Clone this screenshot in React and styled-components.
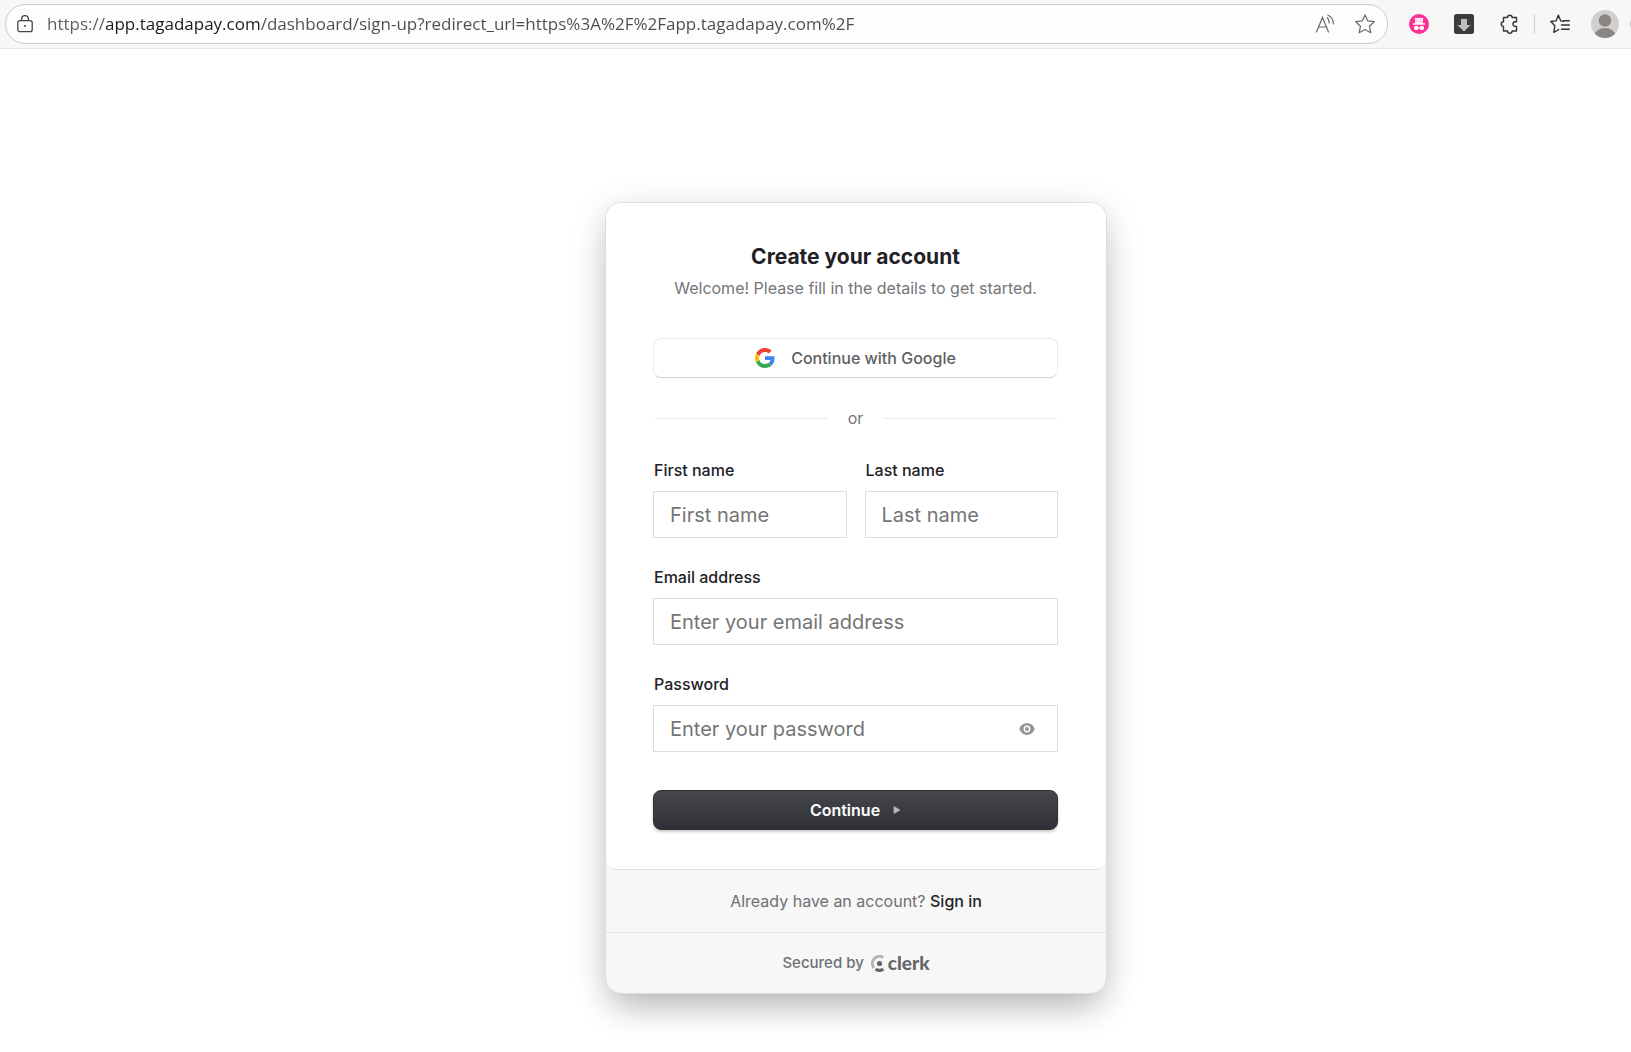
import React, { useState } from 'react'
import styled, { createGlobalStyle } from 'styled-components'

const PAGE_URL =
	'https://app.tagadapay.com/dashboard/sign-up?redirect_url=https%3A%2F%2Fapp.tagadapay.com%2F'

function LockIcon() {
	return (
		<svg width='16' height='18' viewBox='0 0 16 18' fill='none' stroke='#444' strokeWidth='1.3'>
			<rect x='.8' y='5.6' width='14.4' height='11' rx='2.2' />
			<path d='M4.6 5.4V4a3.4 3.4 0 0 1 6.8 0v1.4' />
			<circle cx='8' cy='11' r='1' fill='#444' stroke='none' />
		</svg>
	)
}

function ReadAloudIcon() {
	return (
		<svg width='20' height='20' viewBox='0 0 20 20' fill='none' stroke='#6a6a6a' strokeWidth='1.2' strokeLinecap='round'>
			<path d='M1.500 18 7.500 3.400 13.500 18M3.700 13h7.600' />
			<path d='M12.400 3.600c1.200 1.600 1.800 3.400 1.800 5.400M12.800 1c3.400 1.600 5.600 5 5.600 9' />
		</svg>
	)
}

function StarIcon() {
	return (
		<svg width='20' height='20' viewBox='0 0 20 20' fill='none' stroke='#6a6a6a' strokeWidth='1.2' strokeLinejoin='round'>
			<path d='M10 .9l2.8 6 6.5.8-4.8 4.5 1.3 6.5L10 15.500l-5.800 3.200 1.300-6.500L.7 7.700l6.500-.8z' />
		</svg>
	)
}

function IncognitoIcon() {
	return (
		<svg width='20' height='20' viewBox='0 0 20 20'>
			<circle cx='10' cy='10' r='10' fill='#ff2e93' />
			<path d='M5.800 3.800l1.600.4 1.300-.5 1.300.5 1.300-.5 1.300.5 1.600-.4-.4 5.400H6.200zM4 9.200h12v1.500H4z' fill='#fff' />
			<path d='M6.200 6h7.600M6.200 7.800h7.600' stroke='#ff9dcb' strokeWidth='.7' />
			<circle cx='7.300' cy='14' r='2.300' fill='#fff' />
			<circle cx='12.700' cy='14' r='2.300' fill='#fff' />
			<path d='M9 13.600h2' stroke='#fff' />
		</svg>
	)
}

function DownloadIcon() {
	return (
		<svg width='20' height='20' viewBox='0 0 20 20'>
			<rect width='20' height='20' rx='2.500' fill='#3b3b3d' />
			<path d='M7 5h6v6h3.500L10 17.500 3.500 11H7z' fill='#bdbdbd' />
		</svg>
	)
}

function PuzzleIcon() {
	return (
		<svg width='20' height='20' viewBox='0 0 20 20' fill='none' stroke='#333' strokeWidth='1.4' strokeLinejoin='round'>
			<path d='M4.500 3.500h4a2.300 2.300 0 0 1 4.600 0h4.400v4.300h-1.200a2.300 2.300 0 0 0 0 4.600h1.200V17h-4.400a2.300 2.300 0 0 1-4.600 0h-4v-4.600a2.300 2.300 0 0 1 0-4.600z' />
		</svg>
	)
}

function FavoritesIcon() {
	return (
		<svg width='20' height='20' viewBox='0 0 20 20' fill='none' stroke='#333' strokeWidth='1.4' strokeLinejoin='round' strokeLinecap='round'>
			<path d='M13.500 7.300 10.800 6.900 8.400 1.200 6 6.900.8 7.500l4 4.300-1 6.500 5-2.800' />
			<path d='M13.500 6.800H19.300M11.500 11H19.300M11.500 15.200H19.300' />
		</svg>
	)
}

function AvatarIcon() {
	return (
		<svg width='28' height='28' viewBox='0 0 28 28'>
			<clipPath id='avatar'>
				<circle cx='14' cy='14' r='14' />
			</clipPath>
			<g clipPath='url(#avatar)'>
				<rect width='28' height='28' fill='#d2d0ce' />
				<circle cx='14' cy='10.500' r='6.200' fill='#8a8683' />
				<ellipse cx='14' cy='26' rx='10.500' ry='8' fill='#8a8683' />
			</g>
		</svg>
	)
}

function GoogleIcon() {
	return (
		<svg width='20' height='20' viewBox='0 0 48 48'>
			<path fill='#EA4335' d='M24 9.5c3.54 0 6.71 1.22 9.21 3.6l6.85-6.85C35.9 2.38 30.47 0 24 0 14.62 0 6.51 5.38 2.56 13.22l7.98 6.19C12.43 13.72 17.74 9.5 24 9.5z' />
			<path fill='#4285F4' d='M46.98 24.55c0-1.57-.15-3.09-.38-4.55H24v9.02h12.94c-.58 2.96-2.26 5.48-4.78 7.18l7.73 6c4.51-4.18 7.09-10.36 7.09-17.65z' />
			<path fill='#FBBC05' d='M10.53 28.59c-.48-1.45-.76-2.99-.76-4.59s.27-3.14.76-4.59l-7.98-6.19C.92 16.46 0 20.12 0 24c0 3.88.92 7.54 2.56 10.78l7.97-6.19z' />
			<path fill='#34A853' d='M24 48c6.48 0 11.93-2.13 15.89-5.81l-7.73-6c-2.15 1.45-4.92 2.3-8.16 2.3-6.26 0-11.57-4.22-13.47-9.91l-7.98 6.19C6.51 42.62 14.62 48 24 48z' />
		</svg>
	)
}

function EyeIcon() {
	return (
		<svg width='16' height='12' viewBox='0 0 16 12'>
			<path
				fill='#959595'
				fillRule='evenodd'
				d='M8 0c3.6 0 6.2 2.1 7.4 5.2.2.5.2 1.1 0 1.6C14.200 9.900 11.600 12 8 12S1.800 9.900.6 6.800a2.200 2.200 0 0 1 0-1.600C1.800 2.100 4.400 0 8 0zm0 2.600a3.400 3.400 0 1 0 0 6.800 3.400 3.400 0 0 0 0-6.800z'
			/>
			<circle cx='8' cy='6' r='2' fill='#959595' />
		</svg>
	)
}

function ClerkIcon() {
	return (
		<svg width='14' height='17' viewBox='0 0 14 17'>
			<path d='M12.300 2.600A7 7 0 0 0 3.100 13' fill='none' stroke='#b4b4b6' strokeWidth='3' />
			<circle cx='8.500' cy='8.500' r='2.600' fill='#66666a' />
			<path d='M3.600 15.200l2-2.200c1.800 1 4 1 5.800 0l2 2.200c-2.800 2.400-7 2.400-9.800 0z' fill='#66666a' />
		</svg>
	)
}

function Field({ id, label, children, ...rest }) {
	return (
		<FieldBox>
			<Label htmlFor={id}>{label}</Label>
			<InputWrap>
				<Input id={id} {...rest} />
				{children}
			</InputWrap>
		</FieldBox>
	)
}

function App() {
	const [url, setUrl] = useState(PAGE_URL)
	const [showPassword, setShowPassword] = useState(false)

	return (
		<>
			<GlobalStyle />
			<Toolbar>
				<AddressBar>
					<LockIcon />
					<AddressInput
						type='text'
						aria-label='Address'
						spellCheck={false}
						value={url}
						onChange={(e) => setUrl(e.target.value)}
					/>
					<BarActions>
						<BarButton aria-label='Read aloud'>
							<ReadAloudIcon />
						</BarButton>
						<BarButton aria-label='Add to favorites'>
							<StarIcon />
						</BarButton>
					</BarActions>
				</AddressBar>
				<Extensions>
					<BarButton aria-label='Incognito'>
						<IncognitoIcon />
					</BarButton>
					<BarButton aria-label='Download'>
						<DownloadIcon />
					</BarButton>
					<BarButton aria-label='Extensions'>
						<PuzzleIcon />
					</BarButton>
				</Extensions>
				<Separator />
				<BarButton aria-label='Favorites'>
					<FavoritesIcon />
				</BarButton>
				<ProfileButton aria-label='Profile'>
					<AvatarIcon />
				</ProfileButton>
				<MoreButton aria-label='More' />
			</Toolbar>

			<Page>
				<Card>
					<CardMain>
						<Title>Create your account</Title>
						<Subtitle>Welcome! Please fill in the details to get started.</Subtitle>
						<GoogleButton type='button'>
							<GoogleIcon />
							Continue with Google
						</GoogleButton>
						<Divider>or</Divider>
						<Form onSubmit={(e) => e.preventDefault()}>
							<NameRow>
								<Field id='firstName' label='First name' placeholder='First name' />
								<Field id='lastName' label='Last name' placeholder='Last name' />
							</NameRow>
							<Field
								id='email'
								type='email'
								label='Email address'
								placeholder='Enter your email address'
							/>
							<Field
								id='password'
								type={showPassword ? 'text' : 'password'}
								label='Password'
								placeholder='Enter your password'>
								<EyeButton
									type='button'
									aria-label='Show password'
									onClick={() => setShowPassword(!showPassword)}>
									<EyeIcon />
								</EyeButton>
							</Field>
							<SubmitButton type='submit'>
								Continue
								<svg width='8' height='8' viewBox='0 0 8 8'>
									<path d='M.6 1v6c0 .6.5.9 1 .6l5.200-3c.5-.3.5-.9 0-1.200L1.600.4C1.100.1.6.400.6 1z' fill='#b5b5b8' />
								</svg>
							</SubmitButton>
						</Form>
					</CardMain>
					<SignInRow>
						Already have an account? <SignInLink href='#sign-in'>Sign in</SignInLink>
					</SignInRow>
					<SecuredRow>
						Secured by
						<ClerkLink href='#clerk'>
							<ClerkIcon />
							clerk
						</ClerkLink>
					</SecuredRow>
				</Card>
			</Page>
		</>
	)
}

export default App

const GlobalStyle = createGlobalStyle`
	* {
		box-sizing: border-box;
	}
	body {
		margin: 0;
		background-color: #fff;
		font-family: Inter, 'Liberation Sans', sans-serif;
		font-size: 16px;
		line-height: 22px;
		color: #212126;
	}
	button,
	input {
		font-family: inherit;
	}
	svg {
		display: block;
		flex-shrink: 0;
	}
`

const Toolbar = styled.header`
	display: flex;
	align-items: center;
	height: 49px;
	padding-left: 5px;
	overflow: hidden;
	background-color: #f7f7f7;
	border-bottom: 1px solid #e6e6e6;
`
const AddressBar = styled.div`
	flex: 1;
	display: flex;
	align-items: center;
	gap: 14px;
	height: 40px;
	padding: 0 12px 0 11px;
	background-color: #fdfdfd;
	border: 1px solid #cbcbcb;
	border-radius: 20px;
`
/* the host name is drawn darker than the rest of the address */
const AddressInput = styled.input`
	flex: 1;
	min-width: 0;
	padding: 0;
	border-style: none;
	outline: none;
	font-family: 'Open Sans', 'Noto Sans', sans-serif;
	font-size: 17px;
	line-height: 26px;
	color: #4c4c4c;
	background: linear-gradient(90deg, #5c5c5c 58px, #1a1a1a 58px 213px, #4c4c4c 213px);
	background-clip: text;
	-webkit-text-fill-color: transparent;
`
const BarActions = styled.div`
	display: flex;
	gap: 20px;
`
const BarButton = styled.button`
	display: flex;
	padding: 0;
	border-style: none;
	background: none;
	cursor: pointer;
`
const Extensions = styled.div`
	display: flex;
	gap: 25px;
	margin: 0 15px 0 21px;
`
const Separator = styled.div`
	width: 1px;
	height: 20px;
	margin-right: 15px;
	background-color: #cfcfcf;
`
const ProfileButton = styled(BarButton)`
	margin: 0 11px 0 21px;
`
/* runs off the right edge of the window */
const MoreButton = styled.button`
	flex-shrink: 0;
	width: 28px;
	height: 28px;
	margin-right: -27px;
	padding: 0;
	border: 1px solid #bdbdbd;
	border-radius: 14px;
	background-color: #fdfdfd;
`

const Page = styled.main`
	display: flex;
	justify-content: center;
	padding: 153px 0 56px 81px;
`
const Card = styled.div`
	width: 502px;
	max-width: 100%;
	overflow: hidden;
	background-color: #f7f7f7;
	border: 1px solid #dcdcdc;
	border-radius: 16px;
	box-shadow:
		0 20px 35px -8px rgba(0, 0, 0, 0.22),
		0 6px 36px rgba(0, 0, 0, 0.12);
`
const CardMain = styled.div`
	padding: 40px 48px 39px 47px;
	text-align: center;
	background-color: #fff;
	border-bottom: 1px solid #dedede;
	border-radius: 0 0 10px 10px;
`
const Title = styled.h1`
	margin: 0 0 6px;
	font-size: 21px;
	line-height: 28px;
	font-weight: 700;
`
const Subtitle = styled.p`
	margin: 0;
	color: #75757a;
`
const GoogleButton = styled.button`
	display: flex;
	align-items: center;
	justify-content: center;
	gap: 16px;
	width: 100%;
	height: 40px;
	margin-top: 39px;
	border: 1px solid #ececec;
	border-bottom-color: #d4d4d4;
	border-radius: 8px;
	background-color: #fff;
	font-size: 16px;
	font-weight: 500;
	color: #5f5f63;
	cursor: pointer;
`
const Divider = styled.div`
	display: flex;
	align-items: center;
	gap: 20px;
	margin: 29px 1px 30px;
	color: #75757a;
	&::before,
	&::after {
		content: '';
		flex: 1;
		height: 1px;
		background-color: #ebebeb;
	}
`
const Form = styled.form`
	display: flex;
	flex-direction: column;
	gap: 28px;
	text-align: left;
`
const NameRow = styled.div`
	display: grid;
	grid-template-columns: repeat(2, minmax(0, 1fr));
	gap: 18px;
`
const FieldBox = styled.div`
	display: flex;
	flex-direction: column;
	gap: 10px;
`
const Label = styled.label`
	padding-left: 1px;
	font-weight: 500;
`
const InputWrap = styled.div`
	display: flex;
	align-items: center;
	height: 47px;
	padding: 0 16px;
	border: 1px solid #dcdcdc;
	background-color: #fff;
`
const Input = styled.input`
	flex: 1;
	min-width: 0;
	padding: 0;
	border-style: none;
	outline: none;
	background: none;
	font-size: 20px;
	line-height: 28px;
	color: #212126;
	&::placeholder {
		color: #757575;
		opacity: 1;
	}
`
const EyeButton = styled.button`
	display: flex;
	padding: 6px;
	border-style: none;
	background: none;
	cursor: pointer;
`
const SubmitButton = styled.button`
	display: flex;
	align-items: center;
	justify-content: center;
	gap: 13px;
	height: 40px;
	margin-top: 10px;
	border: 1px solid #2f3037;
	border-radius: 8px;
	background: linear-gradient(#46474c, #2f3037);
	box-shadow: 0 2px 3px rgba(0, 0, 0, 0.2);
	font-size: 16px;
	font-weight: 600;
	color: #fff;
	cursor: pointer;
`
const SignInRow = styled.div`
	padding: 20px 0;
	text-align: center;
	color: #6f6f73;
	border-bottom: 1px solid #e4e4e4;
`
const SignInLink = styled.a`
	font-weight: 500;
	color: #212126;
	text-decoration: none;
`
const SecuredRow = styled.div`
	display: flex;
	align-items: center;
	justify-content: center;
	gap: 7px;
	height: 60px;
	font-size: 15px;
	font-weight: 500;
	color: #6f6f73;
`
const ClerkLink = styled.a`
	display: flex;
	align-items: center;
	gap: 3px;
	font-family: Lato, 'Liberation Sans', sans-serif;
	font-size: 19px;
	font-weight: 900;
	color: #66666a;
	text-decoration: none;
`
